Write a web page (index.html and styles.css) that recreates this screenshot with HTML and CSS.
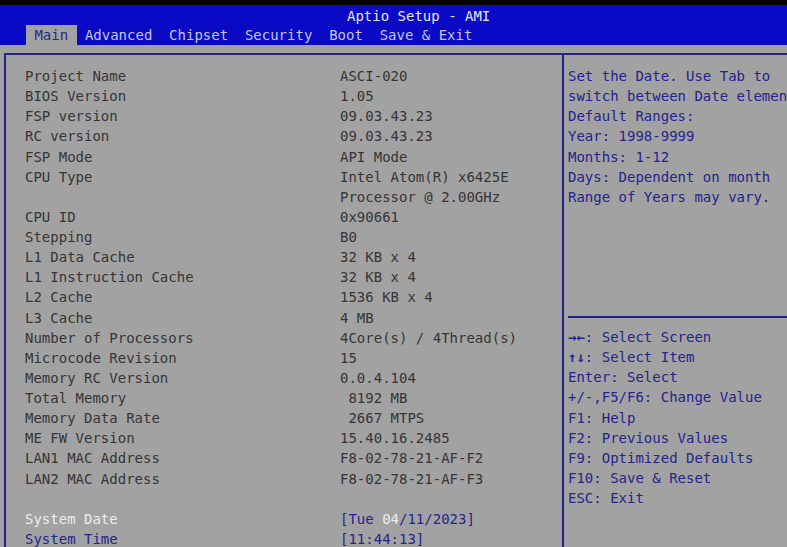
FILE: index.html
```html
<!DOCTYPE html>
<html lang="en">
<head>
    <meta charset="UTF-8">
    <meta name="viewport" content="width=device-width, initial-scale=1.0">
    <title>Aptio Setup - AMI</title>
    <link rel="stylesheet" href="styles.css">
</head>
<body>
    <div class="screen">
        <header class="topbar">
            <div class="title">Aptio Setup - AMI</div>
            <nav class="tabs">
                <span class="tab active">Main</span>
                <span class="tab">Advanced</span>
                <span class="tab">Chipset</span>
                <span class="tab">Security</span>
                <span class="tab">Boot</span>
                <span class="tab">Save &amp; Exit</span>
            </nav>
        </header>

        <div class="frame">
            <section class="info-panel">
                <div class="row"><span>Project Name</span><span>ASCI-020</span></div>
                <div class="row"><span>BIOS Version</span><span>1.05</span></div>
                <div class="row"><span>FSP version</span><span>09.03.43.23</span></div>
                <div class="row"><span>RC version</span><span>09.03.43.23</span></div>
                <div class="row"><span>FSP Mode</span><span>API Mode</span></div>
                <div class="row"><span>CPU Type</span><span>Intel Atom(R) x6425E</span></div>
                <div class="row"><span></span><span>Processor @ 2.00GHz</span></div>
                <div class="row"><span>CPU ID</span><span>0x90661</span></div>
                <div class="row"><span>Stepping</span><span>B0</span></div>
                <div class="row"><span>L1 Data Cache</span><span>32 KB x 4</span></div>
                <div class="row"><span>L1 Instruction Cache</span><span>32 KB x 4</span></div>
                <div class="row"><span>L2 Cache</span><span>1536 KB x 4</span></div>
                <div class="row"><span>L3 Cache</span><span>4 MB</span></div>
                <div class="row"><span>Number of Processors</span><span>4Core(s) / 4Thread(s)</span></div>
                <div class="row"><span>Microcode Revision</span><span>15</span></div>
                <div class="row"><span>Memory RC Version</span><span>0.0.4.104</span></div>
                <div class="row"><span>Total Memory</span><span> 8192 MB</span></div>
                <div class="row"><span>Memory Data Rate</span><span> 2667 MTPS</span></div>
                <div class="row"><span>ME FW Version</span><span>15.40.16.2485</span></div>
                <div class="row"><span>LAN1 MAC Address</span><span>F8-02-78-21-AF-F2</span></div>
                <div class="row"><span>LAN2 MAC Address</span><span>F8-02-78-21-AF-F3</span></div>
                <div class="row"><span></span><span></span></div>
                <div class="row setting selected"><span>System Date</span><span class="field">[Tue <b class="cursor">04</b>/11/2023]</span></div>
                <div class="row setting"><span>System Time</span><span class="field">[11:44:13]</span></div>
            </section>

            <aside class="help-panel">
                <div class="help-text">
                    <p>Set the Date. Use Tab to</p>
                    <p>switch between Date elemen</p>
                    <p>Default Ranges:</p>
                    <p>Year: 1998-9999</p>
                    <p>Months: 1-12</p>
                    <p>Days: Dependent on month</p>
                    <p>Range of Years may vary.</p>
                </div>
                <div class="keys">
                    <p><b class="arrows">→←</b>: Select Screen</p>
                    <p><b class="arrows">↑↓</b>: Select Item</p>
                    <p>Enter: Select</p>
                    <p>+/-,F5/F6: Change Value</p>
                    <p>F1: Help</p>
                    <p>F2: Previous Values</p>
                    <p>F9: Optimized Defaults</p>
                    <p>F10: Save &amp; Reset</p>
                    <p>ESC: Exit</p>
                </div>
            </aside>
        </div>
    </div>
</body>
</html>
```

FILE: styles.css
```css
body {
    margin: 0;
    background-color: #a2a2a2;
    font-family: "DejaVu Sans Mono", "Liberation Mono", monospace;
    font-size: 14px;
    line-height: 20.13px;
    color: #353535;
    overflow: hidden;
}
.screen {
    width: 787px;
    height: 547px;
    border-top: 5px solid #050505;
    box-sizing: border-box;
    overflow: hidden;
}
.topbar {
    background-color: #0a0ac6;
    height: 40px;
}
.title {
    height: 20px;
    line-height: 22px;
    padding-left: 347px;
    color: #e6e6f2;
}
.tabs {
    display: flex;
    padding-left: 26px;
    height: 20px;
}
.tab {
    padding: 0 8.4px;
    line-height: 20px;
    color: #c4c4e4;
    white-space: pre;
}
.tab.active {
    background-color: #a2a2a2;
    color: #26268e;
}
.frame {
    display: flex;
    margin: 8px 0 0 4px;
    border-top: 2px solid #22228a;
    border-left: 2px solid #22228a;
    height: 500px;
}
.info-panel {
    width: 556px;
    padding: 11px 0 0 19px;
    box-sizing: border-box;
}
.row {
    display: grid;
    grid-template-columns: 315px 1fr;
    height: 20.13px;
    white-space: pre;
}
.setting {
    color: #24248c;
}
.setting.selected > span:first-child {
    color: #ececec;
}
.cursor {
    font-weight: normal;
    color: #ececec;
}
.help-panel {
    flex: 1;
    border-left: 2px solid #22228a;
    padding: 11px 0 0 4px;
    color: #24248c;
    overflow: hidden;
}
.help-panel p {
    margin: 0;
    white-space: pre;
}
.help-text {
    height: 250px;
}
.keys {
    border-top: 2px solid #22228a;
    padding-top: 9px;
}
.arrows {
    font-weight: bold;
}
```
